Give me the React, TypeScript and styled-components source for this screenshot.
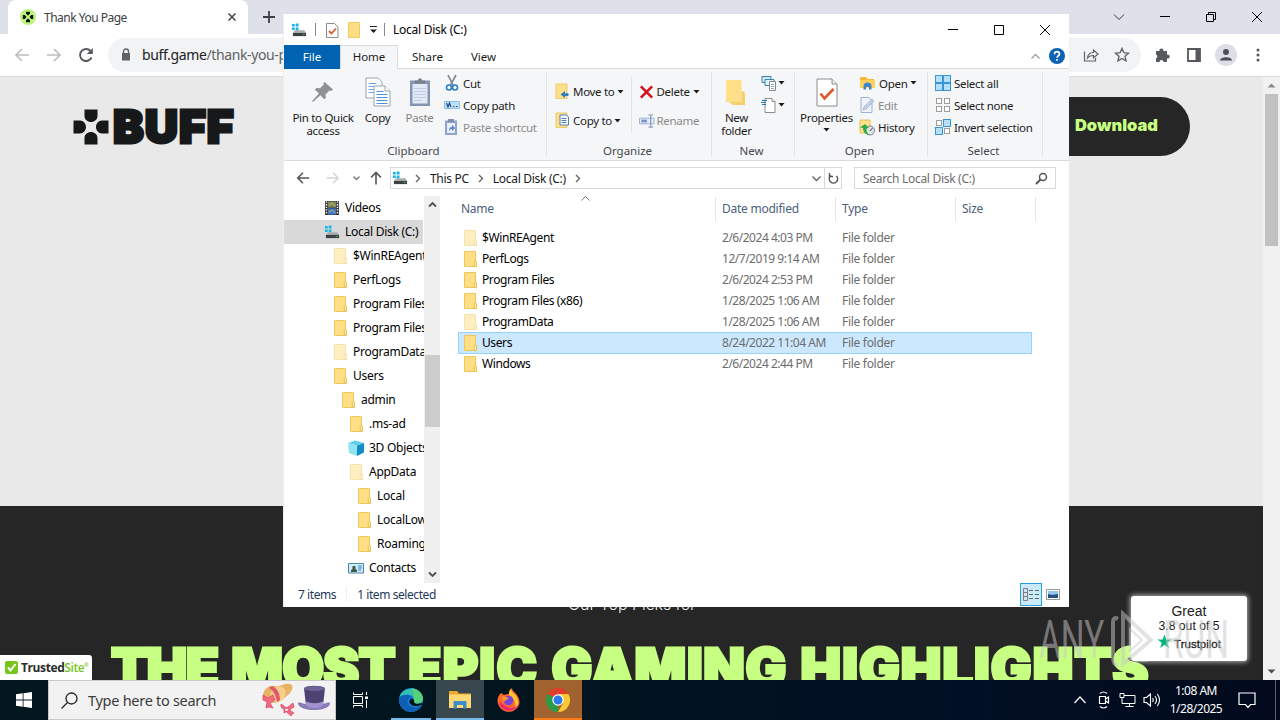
import type { ReactNode } from 'react'
import styled, { createGlobalStyle, css } from 'styled-components'

const GlobalStyle = createGlobalStyle`
    *, *::before, *::after {
        box-sizing: border-box;
    }

    body {
        margin: 0;
        overflow: hidden;
        font-family: 'Noto Sans', 'Open Sans', sans-serif;
        font-size: 11.5px;
        letter-spacing: -0.3px;
        color: #1b1b1b;
    }

    svg {
        display: block;
        flex: none;
    }
`

const Desktop = styled.div`
    position: relative;
    width: 1280px;
    height: 720px;
    overflow: hidden;
    display: grid;
    grid-template-rows: 34px 43px 603px 40px;
    white-space: nowrap;
`

/* ---------- browser ---------- */

const TabStrip = styled.div`
    display: flex;
    background: #dee1e9;
    padding-left: 8px;
`

const Tab = styled.div`
    display: flex;
    align-items: center;
    width: 240px;
    padding: 0 11px 0 12px;
    background: #fff;
    border-radius: 8px 8px 0 0;
    font-size: 12px;
    letter-spacing: -0.5px;
    color: #3c4043;

    span {
        flex: 1;
        margin-left: 8px;
    }
`

const NewTab = styled.div`
    display: flex;
    align-items: center;
    padding-left: 14px;
    flex: 1;
`

const WindowButtons = styled.div<{ $size: number }>`
    display: flex;

    > div {
        display: flex;
        align-items: center;
        justify-content: center;
        width: ${({ $size }) => $size}px;
    }
`

const Toolbar = styled.div`
    display: flex;
    align-items: center;
    background: #fff;
    border-bottom: 1px solid #dcdcdc;
    padding: 0 6px 1px 13px;
`

const ToolIcon = styled.div<{ $width: number }>`
    display: flex;
    justify-content: center;
    width: ${({ $width }) => $width}px;
`

const Omnibox = styled.div`
    display: flex;
    align-items: center;
    flex: 1;
    height: 34px;
    margin-right: 5px;
    padding: 0 11px 0 13px;
    border-radius: 17px;
    background: #f1f3f4;
    font-size: 14px;
    letter-spacing: -0.38px;
    color: #202124;

    p {
        flex: 1;
        margin: 0 0 0 11px;
    }

    em {
        font-style: normal;
        color: #5f6368;
    }
`

const Viewport = styled.div`
    display: grid;
    grid-template-columns: 1fr 17px;
    min-height: 0;
`

const Page = styled.div`
    display: grid;
    grid-template-rows: 429px 174px;
    overflow: hidden;
`

const Hero = styled.div`
    display: flex;
    justify-content: space-between;
    align-items: flex-start;
    padding: 20px 73px 0;
    background: #e9e9e9;
`

const Brand = styled.div`
    display: flex;
    gap: 4px;
    margin-top: 12px;
    color: #161819;
`

const BrandName = styled.div`
    font: 900 46px/35px Inter, 'Liberation Sans', sans-serif;
    letter-spacing: 1px;
    -webkit-text-stroke: 3px #161819;
`

const Download = styled.div`
    width: 260px;
    height: 59px;
    padding-right: 32px;
    border-radius: 30px;
    background: #262626;
    color: #c6ff82;
    font: 900 16.5px/57px Inter, 'Liberation Sans', sans-serif;
    letter-spacing: 0;
    text-align: right;
`

const Picks = styled.div`
    position: relative;
    background: #262626;
    padding: 88px 0 0 111px;
    overflow: hidden;
`

const PicksLead = styled.div`
    margin-left: 457px;
    font: 300 16px/20px Inter, 'Liberation Sans', sans-serif;
    letter-spacing: -0.05px;
    color: #f4f4f4;
`

const PicksTitle = styled.div`
    margin-top: 24px;
    font: 900 54px/60px Inter, 'Liberation Sans', sans-serif;
    letter-spacing: 0.8px;
    word-spacing: 2px;
    color: #c6ff82;
    -webkit-text-stroke: 3px #c6ff82;
`

const Word = styled.span<{ $track: number }>`
    letter-spacing: ${({ $track }) => $track}px;
`

const TrustedSite = styled.div`
    position: absolute;
    left: 0;
    bottom: 0;
    display: flex;
    align-items: center;
    gap: 3px;
    width: 92px;
    height: 25px;
    padding-left: 5px;
    background: #fff;
    border-top-right-radius: 3px;
    font: 700 12px/25px 'Open Sans', sans-serif;
    letter-spacing: -0.4px;
    color: #2b2b2b;

    b {
        color: #76c51c;
        font-weight: 600;
    }

    sup {
        font-size: 5px;
        line-height: 1;
        color: #76c51c;
    }
`

const Trustpilot = styled.div`
    position: absolute;
    right: 16px;
    bottom: 19px;
    width: 116px;
    height: 65px;
    padding-top: 7px;
    border-radius: 3px;
    background: #fff;
    box-shadow: 0 0 5px 1px rgba(255, 255, 255, 0.65);
    text-align: center;
    color: #1b1b1b;
    font: 14px/16px 'Liberation Sans', sans-serif;
    letter-spacing: 0;

    small {
        display: block;
        font-size: 12.2px;
        line-height: 14px;
    }

    div {
        display: flex;
        align-items: center;
        justify-content: center;
        gap: 2px;
        margin-top: 2px;
        font-size: 11.5px;
        letter-spacing: 0;
        -webkit-text-stroke: 0.3px #1b1b1b;
    }
`

const Watermark = styled.div`
    position: absolute;
    left: 1039px;
    top: 610px;
    display: flex;
    align-items: center;
    font: 400 53px/60px Roboto, sans-serif;
    letter-spacing: 0;
    color: rgba(200, 200, 200, 0.5);

    span {
        display: block;
        width: 65px;
        transform: scaleX(0.63);
        transform-origin: 0 0;
    }

    svg {
        margin: 0 8px 0 4px;
    }
`

const PageScroll = styled.div`
    display: flex;
    flex-direction: column;
    align-items: center;
    background: #f1f1f1;

    > div {
        width: 13px;
        height: 152px;
        margin-bottom: auto;
        background: #c1c1c1;
    }
`

const ScrollArrow = styled.svg`
    height: 17px;
    width: 17px;
`

/* ---------- explorer ---------- */

const Explorer = styled.div`
    position: absolute;
    left: 283px;
    top: 14px;
    width: 786px;
    height: 593px;
    display: grid;
    grid-template-rows: 31px 24px 92px 35px 387px 24px;
    background: #fff;
    border-left: 1px solid #eceef2;
`

const TitleBar = styled.div`
    display: flex;
    align-items: center;
    padding: 0 1px 0 7px;
    color: #000;

    > span {
        flex: 1;
        margin-left: 8px;
        font-size: 12px;
        letter-spacing: -0.25px;
    }
`

const Divider = styled.i<{ $left?: number; $right?: number }>`
    width: 1px;
    height: 13px;
    margin: 0 ${({ $right = 0 }) => $right}px 0 ${({ $left = 0 }) => $left}px;
    background: #8a8a8a;
`

const OrganizeDivider = styled(Divider)`
    height: 55px;
    margin: 4px 0 0 7px;
    background: #e2e3e4;
`

const MenuTabs = styled.div`
    display: flex;
    border-bottom: 1px solid #dadbdc;
`

const MenuTab = styled.div<{ $kind?: 'file' | 'open'; $width: number }>`
    width: ${({ $width }) => $width}px;
    height: 24px;
    line-height: 23px;
    text-align: center;
    letter-spacing: 0;

    ${({ $kind }) =>
        $kind === 'file' &&
        css`
            background: #0063b1;
            color: #fff;
        `}

    ${({ $kind }) =>
        $kind === 'open' &&
        css`
            background: #f5f6f7;
            border: 1px solid #dadbdc;
            border-bottom: 0;
            line-height: 21px;
        `}
`

const MenuEnd = styled.div`
    display: flex;
    align-items: center;
    gap: 9px;
    margin-left: auto;
    padding: 0 4px 1px 0;
`

const Ribbon = styled.div`
    display: flex;
    background: #f5f6f7;
    border-bottom: 1px solid #dadbdc;
`

const Group = styled.div<{ $width: number }>`
    display: flex;
    flex-direction: column;
    width: ${({ $width }) => $width}px;
    padding-top: 4px;
    background: linear-gradient(#e2e3e4, #e2e3e4) right 3px / 1px 85px no-repeat;

    h6 {
        margin: -1px 0 0;
        font-size: 11.5px;
        font-weight: 400;
        line-height: 17px;
        text-align: center;
        color: #44484e;
        letter-spacing: 0;
        padding-right: 4px;
    }
`

const GroupBody = styled.div<{ $pad?: number }>`
    display: flex;
    height: 70px;
    padding-left: ${({ $pad = 0 }) => $pad}px;
`

const BigButton = styled.div<{ $width: number; $off?: boolean }>`
    display: flex;
    flex-direction: column;
    align-items: center;
    width: ${({ $width }) => $width}px;
    line-height: 13px;
    text-align: center;
    color: ${({ $off }) => ($off ? '#838383' : '#1b1b1b')};

    > div {
        display: flex;
        align-items: center;
        justify-content: center;
        height: 38px;
    }

    > svg {
        margin-top: 4px;
    }
`

const ButtonColumn = styled.div<{ $left?: number; $row?: number; $top?: number }>`
    margin-left: ${({ $left = 0 }) => $left}px;
    margin-top: ${({ $top = -1 }) => $top}px;

    > div {
        height: ${({ $row = 22 }) => $row}px;
    }
`

const SmallButton = styled.div<{ $off?: boolean; $gap?: number }>`
    display: flex;
    align-items: center;
    gap: ${({ $gap = 3 }) => $gap}px;
    color: ${({ $off }) => ($off ? '#8a8a8a' : '#1b1b1b')};
`

const AddressBar = styled.div`
    display: flex;
    align-items: center;
    padding-bottom: 1px;
    color: #1b1b1b;
`

const NavArrows = styled.div`
    display: grid;
    grid-template-columns: 30px 27px 17px 1fr;
    align-items: center;
    width: 106px;
    padding-left: 12px;
`

const Crumbs = styled.div`
    display: flex;
    align-items: center;
    width: 452px;
    height: 22px;
    border: 1px solid #d9d9d9;
    padding-left: 1px;
    font-size: 12px;
    letter-spacing: -0.3px;

    > span {
        margin: 0 8px 0 9px;
    }
`

const CrumbsEnd = styled.div`
    display: flex;
    align-items: center;
    gap: 3px;
    margin-left: auto;
`

const Refresh = styled.div`
    display: flex;
    align-items: center;
    justify-content: center;
    width: 17px;
    height: 20px;
    border-left: 1px solid #d9d9d9;
`

const Search = styled.div`
    display: flex;
    align-items: center;
    justify-content: space-between;
    width: 202px;
    height: 22px;
    margin-left: 12px;
    padding: 0 7px 0 8px;
    border: 1px solid #d9d9d9;
    font-size: 12px;
    letter-spacing: -0.3px;
    color: #6d6d6d;
`

const Panes = styled.div`
    display: grid;
    grid-template-columns: 140px 17px 1fr;
    min-height: 0;
`

const Tree = styled.div`
    overflow: hidden;
    padding-right: 1px;
`

const TreeRow = styled.div<{ $indent: number; $active?: boolean }>`
    display: flex;
    align-items: center;
    height: 24px;
    padding: 0 0 1px ${({ $indent }) => 40 + $indent * 8}px;
    background: ${({ $active }) => ($active ? '#d9d9d9' : 'none')};
    font-size: 12px;
    letter-spacing: -0.27px;
    color: #000;

    svg {
        margin-right: 5px;
    }
`

const TreeScroll = styled.div`
    display: flex;
    flex-direction: column;
    align-items: center;
    width: 16px;
    background: #f0f0f0;

    > div {
        width: 15px;
        height: 72px;
        margin: 142px 0 auto;
        background: #cdcdcd;
    }
`

const FileList = styled.div`
    position: relative;
    padding-left: 17px;
`

const SortMark = styled.svg`
    position: absolute;
    left: 140px;
    top: 0;
`

const columns = css`
    display: grid;
    grid-template-columns: 258px 120px 120px 80px;
    align-items: center;
`

const ListHead = styled.div`
    ${columns}
    height: 26px;
    margin-bottom: 5px;
    font-size: 12px;
    letter-spacing: -0.25px;
    color: #4c607a;

    > div {
        height: 24px;
        padding-left: 6px;
        border-right: 1px solid #e5e5e5;
        line-height: 24px;
    }

    > div:first-child {
        padding-left: 3px;
    }
`

const FileRow = styled.div<{ $selected?: boolean }>`
    ${columns}
    width: 574px;
    height: 21px;
    font-size: 12px;
    letter-spacing: -0.4px;
    color: #6d6d6d;

    ${({ $selected }) =>
        $selected &&
        css`
            background: #cce8ff;
            box-shadow: inset 0 0 0 1px #99d1ff;
            height: 22px;
            margin-bottom: -1px;
            padding-bottom: 1px;
        `}

    > div {
        padding-left: 6px;
    }

    > div:nth-child(2) {
        letter-spacing: -0.48px;
    }

    > div:nth-child(3) {
        letter-spacing: -0.3px;
    }

    > div:first-child {
        display: flex;
        align-items: center;
        padding-left: 4px;
        gap: 4px;
        color: #000;
    }
`

const StatusBar = styled.div`
    display: flex;
    align-items: center;
    gap: 10px;
    padding: 0 9px 2px 14px;
    font-size: 12px;
    letter-spacing: -0.43px;
    color: #26385c;

    i {
        width: 1px;
        height: 14px;
        background: #f0f0f0;
    }
`

const ViewModes = styled.div`
    display: flex;
    align-items: center;
    gap: 4px;
    margin-left: auto;

    > div {
        display: flex;
        align-items: center;
        justify-content: center;
        width: 22px;
        height: 23px;
        border: 1px solid #2aa0d8;
        background: #c9eaf9;
    }
`

/* ---------- taskbar ---------- */

const Taskbar = styled.div`
    display: flex;
    background: linear-gradient(90deg, #02171f 0, #02151f 40%, #010f24 75%, #020a1c 100%);
    color: #fff;
`

const TaskButton = styled.div<{ $width: number }>`
    display: flex;
    align-items: center;
    justify-content: center;
    width: ${({ $width }) => $width}px;
`

const Running = styled(TaskButton)<{ $line: string; $tint?: string; $inset?: number }>`
    background: ${({ $line, $inset = 0, $tint = 'transparent' }) =>
        `linear-gradient(${$line}, ${$line}) 50% 100% / calc(100% - ${$inset * 2}px) 2px no-repeat ${$tint}`};
`

const SearchBox = styled.div`
    display: flex;
    align-items: center;
    width: 288px;
    padding: 0 4px 0 12px;
    border: 1px solid #c8c8c8;
    background: #f2f2f2;
    color: #3b3b3b;
    font-size: 14.5px;
    letter-spacing: -0.28px;

    span {
        flex: 1;
        margin-left: 10px;
    }
`

const Tray = styled.div`
    display: flex;
    align-items: center;
    gap: 7px;
    margin-left: auto;
`

const TrayMore = styled.svg`
    margin-right: 3px;
`

const Clock = styled.div`
    width: 56px;
    margin: 0 6px 0 0;
    font-size: 12px;
    letter-spacing: -0.5px;
    line-height: 18px;
    text-align: center;
`

const ShowDesktop = styled.div`
    width: 5px;
    height: 40px;
    margin-left: 11px;
    border-left: 1px solid #5a6370;
`

/* ---------- icons ---------- */

const Folder = ({ faded }: { faded?: boolean }) => (
    <svg width='16' height='16' viewBox='0 0 16 16' opacity={faded ? 0.5 : 1}>
        <path d='M2.5.5h11v15h-11z' fill='#ffdf85' stroke='#eec65a' />
        <path d='M12.200 15.500v-5c0-1 2.300-1 2.300 0v5z' fill='#ffe79f' stroke='#e2b53c' strokeWidth='.8' />
    </svg>
)

const Drive = () => (
    <svg width='16' height='16' viewBox='0 0 17 16'>
        <path d='M1 1.500h3v2.800H1zM5 1.200h3v3.100H5zM1 5.300h3v2.800H1zM5 5.300h3v3.100H5z' fill='#1ab3e8' />
        <path d='M4 8.300h10l2 2.700H2.500z' fill='#a9adb0' />
        <path d='M2 11h14v3.500H2z' fill='#3c4043' />
        <path d='M12.500 12.200h2v1h-2z' fill='#44d62c' />
    </svg>
)

const Film = () => (
    <svg width='16' height='16' viewBox='0 0 16 16'>
        <path d='M1 1h14v14H1z' fill='#3a3a3a' />
        <path d='M4 1.500h8v6H4z' fill='#7d8a63' />
        <path d='M4 8.500h8v6H4z' fill='#3f77c9' />
        <path d='M5 5l3-2 3 3M5 12l3-2 3 3' stroke='#d4b04a' fill='none' />
        <path d='M2.500 1.500v13M13.500 1.500v13' stroke='#fff' strokeWidth='1.400' strokeDasharray='1.300 1.300' />
    </svg>
)

const Cube = () => (
    <svg width='16' height='16' viewBox='0 0 16 16'>
        <path d='M0 3l7-2.500L16 3 9 5.500z' fill='#5fd0ea' />
        <path d='M0 3l9 2.500V16L1 13z' fill='#8fe3f2' />
        <path d='M9 5.500L16 3v9.500L9 16z' fill='#128fc8' />
    </svg>
)

const Contact = () => (
    <svg width='16' height='16' viewBox='0 0 16 16'>
        <path d='M.5 3.500h15v9.500H.5z' fill='#d4ecf9' stroke='#4b87a8' />
        <path d='M3 12V10l1.500-1V6h3v3L9 10v2z' fill='#3d5a4d' />
        <path d='M10 6h4M10 8h4M10 10h3' stroke='#2d86c7' />
    </svg>
)

const Cross = ({ size }: { size: number }) => (
    <svg width={size} height={size} viewBox='0 0 36 36'>
        <path
            d='M11.500.5h13V7c0 3.500-3 6-6.500 6s-6.500-2.500-6.500-6zM11.500 35.500h13V29c0-3.500-3-6-6.500-6s-6.500 2.500-6.500 6zM.5 11.500v13H7c3.500 0 6-3 6-6.500s-2.500-6.500-6-6.500zM35.500 11.500v13H29c-3.500 0-6-3-6-6.500s2.500-6.500 6-6.500z'
            fill='#161819'
        />
    </svg>
)

const Caret = () => (
    <svg width='7' height='4' viewBox='0 0 7 4'>
        <path d='M.5 0h6l-3 3.500z' fill='#1b1b1b' />
    </svg>
)

const Chevron = ({ d = 'M2 1l3.500 3.500L2 8', color = '#666', width = 7 }) => (
    <svg width={width} height='9' viewBox={`0 0 ${width} 9`} fill='none' stroke={color} strokeWidth='1.400'>
        <path d={d} />
    </svg>
)

const Checked = ({ width, height }: { width: number; height: number }) => (
    <svg width={width} height={height} viewBox='0 0 22 29' preserveAspectRatio='none'>
        <path d='M1 1h15l5 5v22H1z' fill='#fff' stroke='#8c8c8c' />
        <path d='M16 1v5h5' fill='#f0f0f0' stroke='#8c8c8c' />
        <path d='M4.500 15.500l4 5 9-9.500' fill='none' stroke='#e0592f' strokeWidth='2.600' />
    </svg>
)

const Pin = () => (
    <svg width='22' height='22' viewBox='0 0 22 22' fill='#8c9296'>
        <path d='M12.500 1l8.500 7.500-1.800 1.500-1.700-.6-4 4 .4 3.300-1.600 1.600-4-4L1.500 20.500 0 21l.6-1.600 6.300-6.900-4-3.900 1.700-1.600 3.400.3 4-4-.8-1.200z' />
    </svg>
)

const CopyPages = () => (
    <svg width='26' height='30' viewBox='0 0 26 30' fill='#fff' stroke='#9aa5b0'>
        <path d='M1 1h12l4 4v16H1z' />
        <path d='M3.500 6.500h8M3.500 9.500h10M3.500 12.500h10M3.500 15.500h10' stroke='#6fa6e6' />
        <path d='M9 9h11l5 5v15H9z' />
        <path d='M20 9v5h5' />
        <path d='M11.500 14.500h7M11.500 17.500h11M11.500 20.500h11M11.500 23.500h11M11.500 26.500h11' stroke='#4d8fe0' />
    </svg>
)

const PastePad = () => (
    <svg width='22' height='30' viewBox='0 0 22 30'>
        <path d='M1 3.500h20v25.500H1z' fill='#8595b5' />
        <path d='M3.500 7h15v19.500h-15z' fill='#e3eaf6' />
        <path d='M5 11.500h12M5 14.500h12M5 17.500h12M5 20.500h12M5 23.500h8' stroke='#c0cce4' />
        <path d='M6 6.500V3.500h3C9 .5 13 .5 13 3.500h3v3z' fill='#7a8290' />
    </svg>
)

const Scissors = () => (
    <svg width='16' height='18' viewBox='0 0 16 18' fill='none'>
        <path d='M4 1l5 10M12 1L6.500 11' stroke='#7c8791' strokeWidth='1.600' />
        <circle cx='5' cy='13.500' r='2.500' stroke='#2d7fc4' strokeWidth='1.600' />
        <circle cx='11' cy='13.500' r='2.500' stroke='#2d7fc4' strokeWidth='1.600' />
    </svg>
)

const PathIcon = () => (
    <svg width='16' height='16' viewBox='0 0 16 16'>
        <path d='M.5 4.500h15v7H.5z' fill='#bfe0f7' stroke='#8fc0e4' />
        <path d='M2.500 6l1.500 4 1.500-4 1.500 4M9 9.500h1.500M12 9.500h1.500' fill='none' stroke='#1d4f83' strokeWidth='1.200' />
    </svg>
)

const ShortcutPad = () => (
    <svg width='14' height='16' viewBox='0 0 14 16'>
        <path d='M1 1.500h12V16H1z' fill='#8ea6cf' />
        <path d='M3 4h8v10H3z' fill='#e6edf8' />
        <path d='M4 0h6v3H4z' fill='#8090ad' />
        <path d='M5 12c0-3 1-4 3-4V6l3 3-3 3v-2c-1.500 0-2 .5-3 2z' fill='#5c83c0' />
    </svg>
)

const MoveTo = ({ copy }: { copy?: boolean }) => (
    <svg width='16' height='17' viewBox='0 0 16 17'>
        <path d='M1 1h11v14.500H1z' fill='#ffe08a' stroke='#e9c25c' strokeWidth='.8' />
        {copy ? (
            <path d='M5 3h6l2.500 2v8H5zM6.500 6.500h5M6.500 8.500h5M6.500 10.500h5' fill='#fff' stroke='#4d7fb8' />
        ) : (
            <path d='M5.500 11.500l4.500-3.500v2.200h3.500v2.800H10V15z' fill='#2d7fc4' />
        )}
    </svg>
)

const DeleteX = () => (
    <svg width='15' height='16' viewBox='0 0 16 16' stroke='#d5141d' strokeWidth='2.800'>
        <path d='M2 2l12 12M14 2L2 14' />
    </svg>
)

const RenameIcon = () => (
    <svg width='16' height='16' viewBox='0 0 17 16' fill='none' stroke='#9ab0d2'>
        <path d='M.5 5h15.500v6H.5z' fill='#e4ecf8' />
        <path d='M2.500 8h6' stroke='#7796c6' strokeWidth='3' />
        <path d='M10 1.500h2l.5.5.5-.5h2M12.500 2v12M10 14.500h5' stroke='#6c85ae' />
    </svg>
)

const BigFolder = () => (
    <svg width='22' height='28' viewBox='0 0 22 28'>
        <path d='M0 2h15.500v22H0z' fill='#ffe08a' />
        <path d='M15.500 13c2.500 0 3.500 1 3.500 4v10H7l-4-3h12.500z' fill='#f7d06b' />
    </svg>
)

const NewItem = () => (
    <svg width='17' height='17' viewBox='0 0 17 17' fill='#fff' stroke='#7b8a94'>
        <path d='M1 1.500h9v6H1z' fill='#cfe9f3' stroke='#3a86a8' />
        <path d='M4 4.500h9v6H4z' fill='#e1f1f7' stroke='#3a86a8' />
        <path d='M8.500 6.500h6v9h-6z' />
        <path d='M10 9.500h3M10 11.500h3M10 13.500h3' stroke='#9aa5ad' />
    </svg>
)

const EasyAccess = () => (
    <svg width='17' height='17' viewBox='0 0 17 17' fill='#fff' stroke='#8c8c8c'>
        <path d='M4 1.500h7l3 3v11H4z' />
        <path d='M11 1.500v3h3' />
        <path d='M1 3.500h5M0 5.500h5M1 7.500h4' stroke='#1e7ac0' />
    </svg>
)

const OpenFolder = () => (
    <svg width='17' height='16' viewBox='0 0 17 16'>
        <path d='M1 2h6l1.500 2H15v9H1z' fill='#f6b93a' />
        <path d='M1 5h15v8H1z' fill='#ffd25a' />
        <path d='M4.500 14.500V11q0-3.500 4-3.500t4 3.500v3.500H10V12H7v2.500z' fill='#3b86d0' />
    </svg>
)

const EditIcon = () => (
    <svg width='16' height='16' viewBox='0 0 16 16'>
        <path d='M2 .5h8l3 3v12H2z' fill='#eef2f9' stroke='#9fb0cc' />
        <path d='M4 13l1-3 8-8 2 2-8 8z' fill='#c3cfe4' stroke='#9aaac8' strokeWidth='.7' />
    </svg>
)

const HistoryIcon = () => (
    <svg width='17' height='17' viewBox='0 0 17 17'>
        <path d='M1 1h10v13H1z' fill='#ffe08a' stroke='#e5b848' strokeWidth='.8' />
        <circle cx='11' cy='11.500' r='4.500' fill='#dfe5e8' stroke='#7a8489' />
        <path d='M11 12l2.500-3' stroke='#444' />
        <path d='M1 8.500L6 5l4 4-2.500.3c-.5 2.200.5 4.700 2.500 6.700-4-.5-6-3.500-6-7z' fill='#2fa84a' />
    </svg>
)

const SELECT_STYLES = {
    all: [true, true, true, true],
    none: [false, false, false, false],
    invert: [false, true, true, false],
}

const SelectIcon = ({ kind }: { kind: keyof typeof SELECT_STYLES }) => (
    <svg width='16' height='16' viewBox='0 0 16 16'>
        {SELECT_STYLES[kind].map((on, i) => {
            const x = (i % 2) * 8
            const y = Math.floor(i / 2) * 8
            return on ? (
                <rect key={i} x={x + 0.5} y={y + 0.5} width='7' height='7' fill='#b5dffa' stroke='#3a95d8' />
            ) : (
                <rect key={i} x={x + 1.5} y={y + 1.5} width='5' height='5' fill='#fff' stroke='#9d9d9d' />
            )
        })}
    </svg>
)

/* arrow used by both the browser and the explorer navigation */
const Arrow = ({ color, size = 16, turn = 0, weight = 1.6 }: { color: string; size?: number; turn?: number; weight?: number }) => (
    <svg width={size} height={size} viewBox='0 0 16 16' fill='none' stroke={color} strokeWidth={weight}>
        <path d='M15 8H2M8 2L2 8l6 6' transform={`rotate(${turn} 8 8)`} />
    </svg>
)

/* ---------- data ---------- */

const tree: { name: string; indent: number; icon: ReactNode; active?: boolean }[] = [
    { name: 'Videos', indent: 0, icon: <Film /> },
    { name: 'Local Disk (C:)', indent: 0, icon: <Drive />, active: true },
    { name: '$WinREAgent', indent: 1, icon: <Folder faded /> },
    { name: 'PerfLogs', indent: 1, icon: <Folder /> },
    { name: 'Program Files', indent: 1, icon: <Folder /> },
    { name: 'Program Files', indent: 1, icon: <Folder /> },
    { name: 'ProgramData', indent: 1, icon: <Folder faded /> },
    { name: 'Users', indent: 1, icon: <Folder /> },
    { name: 'admin', indent: 2, icon: <Folder /> },
    { name: '.ms-ad', indent: 3, icon: <Folder /> },
    { name: '3D Objects', indent: 3, icon: <Cube /> },
    { name: 'AppData', indent: 3, icon: <Folder faded /> },
    { name: 'Local', indent: 4, icon: <Folder /> },
    { name: 'LocalLow', indent: 4, icon: <Folder /> },
    { name: 'Roaming', indent: 4, icon: <Folder /> },
    { name: 'Contacts', indent: 3, icon: <Contact /> },
]

const files = [
    { name: '$WinREAgent', date: '2/6/2024 4:03 PM', faded: true },
    { name: 'PerfLogs', date: '12/7/2019 9:14 AM' },
    { name: 'Program Files', date: '2/6/2024 2:53 PM' },
    { name: 'Program Files (x86)', date: '1/28/2025 1:06 AM' },
    { name: 'ProgramData', date: '1/28/2025 1:06 AM', faded: true },
    { name: 'Users', date: '8/24/2022 11:04 AM', selected: true },
    { name: 'Windows', date: '2/6/2024 2:44 PM' },
]

function Browser() {
    return (
        <>
            <TabStrip>
                <Tab>
                    <svg width='16' height='16' viewBox='0 0 16 16'>
                        <circle cx='8' cy='8' r='8' fill='#b9f57c' />
                        <path d='M6 2.800h4v2L8 6.500 6 4.800zM6 13.200h4v-2L8 9.500l-2 1.700zM2.800 6v4h2L6.500 8 4.800 6zM13.200 6v4h-2L9.500 8l1.700-2z' fill='#111' />
                    </svg>
                    <span>Thank You Page</span>
                    <svg width='10' height='10' viewBox='0 0 10 10' stroke='#45494d' strokeWidth='1.600'>
                        <path d='M1.500 1.500l7 7M8.500 1.500l-7 7' />
                    </svg>
                </Tab>
                <NewTab>
                    <svg width='14' height='14' viewBox='0 0 14 14' stroke='#3c4043' strokeWidth='1.800'>
                        <path d='M7 1v12M1 7h12' />
                    </svg>
                </NewTab>
                <WindowButtons $size={46}>
                    <div>
                        <svg width='12' height='8' viewBox='0 0 12 8' fill='none' stroke='#333'>
                            <path d='M1 1.500l5 5 5-5' />
                        </svg>
                    </div>
                    <div>
                        <svg width='10' height='2' viewBox='0 0 10 2'>
                            <path d='M0 .5h10' stroke='#000' />
                        </svg>
                    </div>
                    <div>
                        <svg width='10' height='10' viewBox='0 0 10 10' fill='none' stroke='#000'>
                            <path d='M.5 2.500h7v7h-7zM2.500 2.500v-2h7v7h-2' />
                        </svg>
                    </div>
                    <div>
                        <svg width='10' height='10' viewBox='0 0 10 10' stroke='#000'>
                            <path d='M0 0l10 10M10 0L0 10' />
                        </svg>
                    </div>
                </WindowButtons>
            </TabStrip>

            <Toolbar>
                <ToolIcon $width={18}>
                    <Arrow color='#babcbe' />
                </ToolIcon>
                <ToolIcon $width={46}>
                    <Arrow color='#babcbe' turn={180} />
                </ToolIcon>
                <ToolIcon $width={18}>
                    <svg width='16' height='16' viewBox='0 0 16 16' fill='none'>
                        <path d='M13.500 10.500A6 6 0 1 1 12.500 4' stroke='#55585c' strokeWidth='1.900' />
                        <path d='M14.800 1v6h-6z' fill='#55585c' />
                    </svg>
                </ToolIcon>
                <ToolIcon $width={13} />
                <Omnibox>
                    <svg width='10' height='13' viewBox='0 0 10 13'>
                        <path d='M1 5h8v7.500H1z' fill='#5f6368' />
                        <path d='M2.500 5V3.500a2.500 2.500 0 0 1 5 0V5' fill='none' stroke='#5f6368' strokeWidth='1.400' />
                    </svg>
                    <p>
                        buff.game<em>/thank-you-page</em>
                    </p>
                    <svg width='16' height='16' viewBox='0 0 16 16' fill='none' stroke='#5f6368' strokeWidth='1.200'>
                        <path d='M1.500 4.500v9.500h11v-3' />
                        <path d='M4.500 11c.3-4 2.500-5.500 6-5.500V3L15 7l-4.500 4V8.500c-2.500 0-4.500.5-6 2.500z' />
                    </svg>
                    <svg width='31' height='16' viewBox='-15 0 31 16' fill='none' stroke='#5f6368' strokeWidth='1.400'>
                        <path d='M8 1.500l1.900 4.200 4.600.5L11 9.300l1 4.500-4-2.300-4 2.300 1-4.500-3.500-3.100 4.600-.5z' />
                    </svg>
                </Omnibox>
                <ToolIcon $width={32}>
                    <svg width='16' height='16' viewBox='0 0 16 16' fill='#55585c'>
                        <path d='M2 4h3.500a2 2 0 1 1 3.800 0H13v3.700a2 2 0 1 1 0 3.700V15H9.500a2 2 0 0 0-4 0H2v-3.800a1.900 1.900 0 0 0 0-3.600z' />
                    </svg>
                </ToolIcon>
                <ToolIcon $width={32}>
                    <svg width='14' height='14' viewBox='0 0 14 14'>
                        <path d='M1 1h12v12H1z' fill='#fff' stroke='#55585c' strokeWidth='1.800' />
                        <path d='M8.500 1H13v12H8.500z' fill='#55585c' />
                    </svg>
                </ToolIcon>
                <ToolIcon $width={32}>
                    <svg width='22' height='22' viewBox='0 0 22 22'>
                        <circle cx='11' cy='11' r='11' fill='#dcdfe6' />
                        <circle cx='11' cy='8' r='3' fill='#4b505a' />
                        <path d='M5 16.500c0-4.500 12-4.500 12 0z' fill='#4b505a' />
                    </svg>
                </ToolIcon>
                <ToolIcon $width={32}>
                    <svg width='4' height='14' viewBox='0 0 4 14' fill='#55585c'>
                        <circle cx='2' cy='2' r='1.500' />
                        <circle cx='2' cy='7' r='1.500' />
                        <circle cx='2' cy='12' r='1.500' />
                    </svg>
                </ToolIcon>
            </Toolbar>

            <Viewport>
                <Page>
                    <Hero>
                        <Brand>
                            <Cross size={36} />
                            <BrandName>BUFF</BrandName>
                        </Brand>
                        <Download>Download</Download>
                    </Hero>
                    <Picks>
                        <PicksLead>Our Top Picks for</PicksLead>
                        <PicksTitle>
                            <Word $track={-1.3}>THE</Word> <Word $track={-0.8}>MOST</Word>{' '}
                            <Word $track={1.3}>EPIC</Word> <Word $track={0.7}>GAMING</Word>{' '}
                            <Word $track={1.1}>HIGHLIGHTS</Word>
                        </PicksTitle>
                        <TrustedSite>
                            <svg width='13' height='13' viewBox='0 0 13 13'>
                                <rect width='13' height='13' rx='2' fill='#76c51c' />
                                <path d='M3 6.500l2.500 3L10.500 3' fill='none' stroke='#fff' strokeWidth='2' />
                            </svg>
                            <span>
                                Trusted<b>Site</b>
                                <sup>®</sup>
                            </span>
                        </TrustedSite>
                        <Trustpilot>
                            Great
                            <small>3.8 out of 5</small>
                            <div>
                                <svg width='15' height='17' viewBox='0 1 15 17'>
                                    <path d='M7.500.5l1.700 5h5.300l-4.300 3.200 1.700 5.300-4.400-3.200L3.100 14l1.700-5.300L.5 5.500h5.300z' fill='#00b67a' />
                                </svg>
                                Trustpilot
                            </div>
                        </Trustpilot>
                    </Picks>
                </Page>
                <PageScroll>
                    <ScrollArrow viewBox='0 0 17 17'>
                        <path d='M4.500 10.500l4-4 4 4z' fill='#8a8a8a' />
                    </ScrollArrow>
                    <div />
                    <ScrollArrow viewBox='0 0 17 17'>
                        <path d='M4.500 6.500l4 4 4-4z' fill='#505050' />
                    </ScrollArrow>
                </PageScroll>
            </Viewport>
        </>
    )
}

function RibbonBar() {
    return (
        <Ribbon>
            <Group $width={263}>
                <GroupBody $pad={7}>
                    <BigButton $width={64}>
                        <div>
                            <Pin />
                        </div>
                        Pin to Quick
                        <br />
                        access
                    </BigButton>
                    <BigButton $width={45}>
                        <div>
                            <CopyPages />
                        </div>
                        Copy
                    </BigButton>
                    <BigButton $width={39} $off>
                        <div>
                            <PastePad />
                        </div>
                        Paste
                    </BigButton>
                    <ButtonColumn $left={5}>
                        <SmallButton>
                            <Scissors />
                            Cut
                        </SmallButton>
                        <SmallButton>
                            <PathIcon />
                            Copy path
                        </SmallButton>
                        <SmallButton $off $gap={5}>
                            <ShortcutPad />
                            Paste shortcut
                        </SmallButton>
                    </ButtonColumn>
                </GroupBody>
                <h6>Clipboard</h6>
            </Group>

            <Group $width={165}>
                <GroupBody $pad={8}>
                    <ButtonColumn $row={29} $top={4}>
                        <SmallButton $gap={2}>
                            <MoveTo />
                            Move to
                            <Caret />
                        </SmallButton>
                        <SmallButton $gap={2}>
                            <MoveTo copy />
                            Copy to
                            <Caret />
                        </SmallButton>
                    </ButtonColumn>
                    <OrganizeDivider />
                    <ButtonColumn $row={29} $top={4} $left={7}>
                        <SmallButton>
                            <DeleteX />
                            Delete
                            <Caret />
                        </SmallButton>
                        <SmallButton $off $gap={2}>
                            <RenameIcon />
                            Rename
                        </SmallButton>
                    </ButtonColumn>
                </GroupBody>
                <h6>Organize</h6>
            </Group>

            <Group $width={83}>
                <GroupBody $pad={5}>
                    <BigButton $width={39}>
                        <div>
                            <BigFolder />
                        </div>
                        New
                        <br />
                        folder
                    </BigButton>
                    <ButtonColumn $left={5}>
                        <SmallButton $gap={0}>
                            <NewItem />
                            <Caret />
                        </SmallButton>
                        <SmallButton $gap={0}>
                            <EasyAccess />
                            <Caret />
                        </SmallButton>
                    </ButtonColumn>
                </GroupBody>
                <h6>New</h6>
            </Group>

            <Group $width={133}>
                <GroupBody $pad={4}>
                    <BigButton $width={55}>
                        <div>
                            <Checked width={22} height={29} />
                        </div>
                        Properties
                        <Caret />
                    </BigButton>
                    <ButtonColumn $left={5}>
                        <SmallButton>
                            <OpenFolder />
                            Open
                            <Caret />
                        </SmallButton>
                        <SmallButton $off>
                            <EditIcon />
                            Edit
                        </SmallButton>
                        <SmallButton $gap={2}>
                            <HistoryIcon />
                            History
                        </SmallButton>
                    </ButtonColumn>
                </GroupBody>
                <h6>Open</h6>
            </Group>

            <Group $width={115}>
                <GroupBody $pad={7}>
                    <ButtonColumn>
                        <SmallButton>
                            <SelectIcon kind='all' />
                            Select all
                        </SmallButton>
                        <SmallButton>
                            <SelectIcon kind='none' />
                            Select none
                        </SmallButton>
                        <SmallButton>
                            <SelectIcon kind='invert' />
                            Invert selection
                        </SmallButton>
                    </ButtonColumn>
                </GroupBody>
                <h6>Select</h6>
            </Group>
        </Ribbon>
    )
}

function FileExplorer() {
    return (
        <Explorer>
            <TitleBar>
                <Drive />
                <Divider $left={8} $right={7} />
                <svg width='17' height='16' viewBox='-3 0 17 16'>
                    <path d='M.5 1.500h8l3.500 3.500v10.500H.5z' fill='#fff' stroke='#8c8c8c' />
                    <path d='M3 9l2.500 2.500L10 6.500' fill='none' stroke='#e0592f' strokeWidth='1.800' />
                </svg>
                <svg width='29' height='16' viewBox='-6 0 29 16'>
                    <path d='M2.500.5h11v15h-11z' fill='#ffdf85' stroke='#f0cb62' />
                </svg>
                <svg width='9' height='8' viewBox='0 0 9 8'>
                    <path d='M1 .5h7' stroke='#222' />
                    <path d='M1 3.500h7l-3.500 3.500z' fill='#222' />
                </svg>
                <Divider $left={6} />
                <span>Local Disk (C:)</span>
                <WindowButtons $size={46}>
                    <div>
                        <svg width='10' height='2' viewBox='0 0 10 2'>
                            <path d='M0 .5h10' stroke='#000' />
                        </svg>
                    </div>
                    <div>
                        <svg width='10' height='10' viewBox='0 0 10 10' fill='none' stroke='#000'>
                            <path d='M.5.5h9v9h-9z' />
                        </svg>
                    </div>
                    <div>
                        <svg width='10' height='10' viewBox='0 0 10 10' stroke='#000'>
                            <path d='M0 0l10 10M10 0L0 10' />
                        </svg>
                    </div>
                </WindowButtons>
            </TitleBar>

            <MenuTabs>
                <MenuTab $kind='file' $width={56}>
                    File
                </MenuTab>
                <MenuTab $kind='open' $width={58}>
                    Home
                </MenuTab>
                <MenuTab $width={59}>Share</MenuTab>
                <MenuTab $width={53}>View</MenuTab>
                <MenuEnd>
                    <Chevron width={9} d='M.5 6.500l4-4 4 4' color='#a0a0a0' />
                    <svg width='16' height='16' viewBox='0 0 16 16'>
                        <circle cx='8' cy='8' r='8' fill='#0c63b4' />
                        <path d='M5.500 6.200c0-3.400 5-3.200 5-.3 0 1.900-2.400 1.800-2.400 3.800M8 11v1.800' fill='none' stroke='#fff' strokeWidth='1.700' />
                    </svg>
                </MenuEnd>
            </MenuTabs>

            <RibbonBar />

            <AddressBar>
                <NavArrows>
                    <Arrow color='#555' size={14} weight={1.8} />
                    <Arrow color='#d3d3d3' size={14} turn={180} weight={1.6} />
                    <Chevron width={7} d='M.5 2.500l3 3 3-3' color='#777' />
                    <svg width='12' height='14' viewBox='0 0 12 14' fill='none' stroke='#555' strokeWidth='1.600'>
                        <path d='M6 13.500V2M1 6.500l5-5 5 5' />
                    </svg>
                </NavArrows>
                <Crumbs>
                    <svg width='22' height='16' viewBox='0 0 22 16'>
                        <Drive />
                    </svg>
                    <Chevron />
                    <span>This PC</span>
                    <Chevron />
                    <span>Local Disk (C:)</span>
                    <Chevron />
                    <CrumbsEnd>
                        <Chevron width={9} d='M.5 2.500l4 4 4-4' />
                        <Refresh>
                            <svg width='11' height='13' viewBox='0 0 11 13' fill='none' stroke='#555' strokeWidth='1.400'>
                                <path d='M3 3.500a4.200 4.200 0 1 0 5.500.5' />
                                <path d='M1.500 1v3.500H5' />
                            </svg>
                        </Refresh>
                    </CrumbsEnd>
                </Crumbs>
                <Search>
                    Search Local Disk (C:)
                    <svg width='13' height='13' viewBox='0 0 13 13' fill='none' stroke='#555' strokeWidth='1.500'>
                        <circle cx='8' cy='5' r='3.500' />
                        <path d='M5.500 7.500L1 12' strokeWidth='1.900' />
                    </svg>
                </Search>
            </AddressBar>

            <Panes>
                <Tree>
                    {tree.map(({ name, indent, icon, active }, i) => (
                        <TreeRow key={i} $indent={indent} $active={active}>
                            {icon}
                            {name}
                        </TreeRow>
                    ))}
                </Tree>
                <TreeScroll>
                    <ScrollArrow viewBox='0 0 17 17' fill='none' stroke='#505050' strokeWidth='1.800'>
                        <path d='M5 10.500l3.500-3.500 3.500 3.500' />
                    </ScrollArrow>
                    <div />
                    <ScrollArrow viewBox='0 0 17 17' fill='none' stroke='#505050' strokeWidth='1.800'>
                        <path d='M5 6.500l3.500 3.500 3.500-3.500' />
                    </ScrollArrow>
                </TreeScroll>
                <FileList>
                    <SortMark width='9' height='5' viewBox='0 0 9 5' fill='none' stroke='#777'>
                        <path d='M.5 4.500l4-4 4 4' />
                    </SortMark>
                    <ListHead>
                        <div>Name</div>
                        <div>Date modified</div>
                        <div>Type</div>
                        <div>Size</div>
                    </ListHead>
                    {files.map(({ name, date, faded, selected }) => (
                        <FileRow key={name} $selected={selected}>
                            <div>
                                <Folder faded={faded} />
                                {name}
                            </div>
                            <div>{date}</div>
                            <div>File folder</div>
                        </FileRow>
                    ))}
                </FileList>
            </Panes>

            <StatusBar>
                7 items
                <i />
                1 item selected
                <ViewModes>
                    <div>
                        <svg width='17' height='13' viewBox='0 0 17 13' fill='none' stroke='#666'>
                            <path d='M.5.5h4v12h-4zM.5 4.500h4M.5 8.500h4' stroke='#8a7a7a' />
                            <path d='M6 2.500h4M6 6.500h4M6 10.500h4M12 2.500h4M12 6.500h4M12 10.500h4' />
                        </svg>
                    </div>
                    <svg width='14' height='11' viewBox='0 0 14 11'>
                        <path d='M.5.5h13v10H.5z' fill='#fff' stroke='#999' />
                        <path d='M2 2h10v7H2z' fill='#8ec4ee' />
                        <path d='M2 5l4 1 6-1v4H2z' fill='#28507d' />
                    </svg>
                </ViewModes>
            </StatusBar>
        </Explorer>
    )
}

function StartBar() {
    return (
        <Taskbar>
            <TaskButton $width={48}>
                <svg width='16' height='16' viewBox='0 0 16 16' fill='#fff'>
                    <path d='M0 2.200l6.700-.9v6.300H0zM7.500 1.200L16 0v7.600H7.500zM0 8.400h6.700v6.300L0 13.800zM7.500 8.400H16V16l-8.500-1.200z' />
                </svg>
            </TaskButton>
            <SearchBox>
                <svg width='17' height='17' viewBox='0 0 17 17' fill='none' stroke='#222' strokeWidth='1.300'>
                    <circle cx='10.500' cy='6.500' r='5.500' />
                    <path d='M6.500 10.500L.5 16.500' />
                </svg>
                <span>Type here to search</span>
                <svg width='36' height='34' viewBox='0 0 36 34'>
                    <path d='M2 12C3 5 9 2 14 3c5 1 9-3 15-2 4 1 3 7-2 11s-9 8-14 8S1 17 2 12z' fill='#e9b367' />
                    <path d='M10 15C8 6 16 1 21 4c6 3 4 11-1 14-4 2-9 1-10-3z' fill='#f6cf8c' />
                    <path d='M11 3c5 2 8 7 8 14l-3 2C15 12 12 7 8 5z' fill='#e2566b' />
                    <path d='M2 12l5 3 5-3 2 5-5 3 3 5-4-1-3 1 1-6-4-2zM20 21l13 9-2 1-1 2-10-9zM32 20l-9 7 0 3 10-6z' fill='#ef6d80' stroke='#d9415c' strokeWidth='.7' />
                </svg>
                <svg width='34' height='30' viewBox='0 0 34 30'>
                    <path d='M1 19c3 8 29 8 32 0 1-2-3-2-6 0H7c-3-2-7-2-6 0z' fill='#8b7bb8' />
                    <path d='M7 3c4-3 16-3 21 0l-2 18c-4 3-13 3-17 0z' fill='#4d4372' />
                    <ellipse cx='17.500' cy='3.500' rx='10.500' ry='2.500' fill='#6d6298' />
                    <path d='M8.500 16c5 3 13 3 18 0l-.5 5c-4 3-13 3-17 0z' fill='#a293cf' />
                </svg>
            </SearchBox>
            <TaskButton $width={50}>
                <svg width='18' height='16' viewBox='0 0 18 16' fill='none' stroke='#fff'>
                    <path d='M1.500 4.500h9v7h-9zM1.500.5v2h9v-2M1.500 15.500v-2h9v2M14.500 0v3M14.500 8v8' />
                    <path d='M13 4.500h3v2.500h-3z' fill='#fff' stroke='none' />
                </svg>
            </TaskButton>
            <Running $width={50} $inset={5} $line='#76b9ed'>
                <svg width='26' height='26' viewBox='0 0 26 26'>
                    <circle cx='13' cy='13' r='12' fill='#1683d8' />
                    <path d='M1.500 10C4 1 18-2 24 8c2.500 6-1 9-5 9-5 0-4-2-3-4 0-6-9-7-14.500-3z' fill='#35c1b1' />
                    <path d='M14 1.200c7 .3 12 6.800 11 11.800-2 5-9 4-10 2 3-4-1-10-1-13.800z' fill='#66d66a' opacity='.75' />
                    <path d='M1.300 11C4 7 12 7 14.500 11c-5-1-6 4-3.500 7 3 3 8 3 12 .5-3 5.500-9 7.500-14 5.500C3 21.500.5 16 1.300 11z' fill='#0f5fb5' />
                    <path d='M14.500 11.500c-3 0-4 3-2.500 5 2 3 7 3.500 12 1 .8-1 .5-2-.5-1.500-3 1.300-7 1-7.500-1 .3-1.200 0-2.500-1.500-3.500z' fill='#02151f' />
                </svg>
            </Running>
            <Running $width={48} $tint='#38464e' $line='#76b9ed'>
                <svg width='22' height='20' viewBox='0 0 22 20'>
                    <path d='M0 1h8l2 2.500h12V18H0z' fill='#e9a72c' />
                    <path d='M0 4.500h22V18H0z' fill='#ffd874' />
                    <path d='M4.500 18.500v-7.500h13v7.500h-3.500V15H8v3.500z' fill='#3d8fc6' />
                </svg>
            </Running>
            <TaskButton $width={50}>
                <svg width='24' height='24' viewBox='0 0 24 24'>
                    <path d='M4 5l3 2c2-1 4-1 5-1 0-3 1-5 3-6 0 3 3 4 5 7 4 6 3 11-1 14-5 5-14 3-17-3C-1 13 1 8 4 5z' fill='#ff6a2b' />
                    <path d='M14 1c0 3 3 4 5 7 4 6 2 10-1 12 1-5-1-11-6-13 0-3 0-4 2-6z' fill='#ffc62e' />
                    <path d='M2 14c1 10 16 12 20 2-3 4-8 5-12 3-3-1-4-4-8-5z' fill='#f2286f' />
                    <circle cx='11.500' cy='12.500' r='4.800' fill='#7a45d6' />
                    <path d='M5 9c3-1 5 0 7 2-2 0-4 1-5 3z' fill='#ff9a30' />
                </svg>
            </TaskButton>
            <Running $width={48} $tint='#a0632f' $line='#ff7a12'>
                <svg width='24' height='24' viewBox='0 0 24 24'>
                    <path d='M12 12L1.600 6A12 12 0 0 1 22.400 6z' fill='#e33b2e' />
                    <path d='M12 12v12A12 12 0 0 1 1.600 6z' fill='#2a9b48' />
                    <path d='M12 6h10.400A12 12 0 0 1 12 24l5.200-9z' fill='#fcc934' />
                    <circle cx='12' cy='12' r='5.700' fill='#fff' />
                    <circle cx='12' cy='12' r='4.500' fill='#2f78ea' />
                </svg>
            </Running>
            <Tray>
                <TrayMore width='12' height='16' viewBox='0 0 12 16' fill='none' stroke='#fff' strokeWidth='1.200'>
                    <path d='M.5 11L6 5l5.500 6' />
                </TrayMore>
                <svg width='16' height='18' viewBox='0 0 16 18' fill='none' stroke='#fff' strokeWidth='1.200'>
                    <path d='M3.500 5.500h6v7h-6zM9.500 8l3-2v6l-3-2M4 2.500Q7.500-.5 11 2.500M4 15.500q3.500 3 7 0' />
                </svg>
                <svg width='17' height='16' viewBox='0 0 17 16' fill='none' stroke='#fff'>
                    <path d='M5 3.500h11v8H4.500M1 1.500h4v4H1zM3 5.500v6h2M10.500 11.500v2.500M6.500 14.500h8' />
                </svg>
                <svg width='18' height='16' viewBox='0 0 18 16' fill='none' stroke='#fff' strokeWidth='1.100'>
                    <path d='M1 5.500h2.500l4-3.500v12l-4-3.500H1zM9.500 6q1.500 2 0 4M12 4q3 4 0 8M14.300 2q4.500 6 0 12' />
                </svg>
                <Clock>
                    1:08 AM
                    <br />
                    1/28/2025
                </Clock>
                <svg width='20' height='18' viewBox='-3 0 20 18' fill='none' stroke='#fff' strokeWidth='1.200'>
                    <path d='M-1 2h16v11.500H10.500L8 16.500l-2.500-3H-1z' />
                </svg>
                <ShowDesktop />
            </Tray>
        </Taskbar>
    )
}

function App() {
    return (
        <Desktop>
            <GlobalStyle />
            <Browser />
            <StartBar />
            <FileExplorer />
            <Watermark>
                <span>ANY</span>
                <svg width='47' height='60' viewBox='0 0 47 60' fill='none' stroke='currentColor' strokeWidth='4'>
                    <path d='M10 9q-5-3-5 4v34q0 8 5 8M15 4v50L43 30z' />
                    <path d='M22 19v22l12-11z' strokeWidth='2' />
                </svg>
                <span>RUN</span>
            </Watermark>
        </Desktop>
    )
}

export default App
